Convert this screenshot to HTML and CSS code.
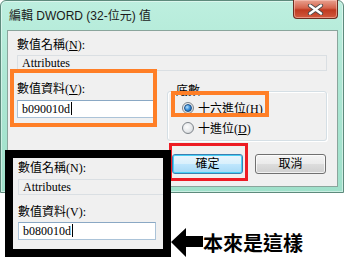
FILE: index.html
```html
<!DOCTYPE html>
<html lang="zh-Hant">
<head>
    <meta charset="UTF-8">
    <meta name="viewport" content="width=device-width, initial-scale=1.0">
    <title>編輯 DWORD (32-位元) 值</title>
    <link rel="stylesheet" href="styles.css">
</head>
<body>
    <div class="window">
        <div class="titlebar">
            <span class="title">編輯 DWORD (32-位元) 值</span>
            <button class="close" aria-label="關閉">
                <svg width="17" height="11" viewBox="0 0 17 11">
                    <path d="M3 1.5 L14 9.5 M14 1.5 L3 9.5" stroke="#4a4a4a" stroke-width="4.2" stroke-linecap="round"/>
                    <path d="M3 1.5 L14 9.5 M14 1.5 L3 9.5" stroke="#fff" stroke-width="2.4" stroke-linecap="round"/>
                </svg>
            </button>
        </div>
        <div class="client">
            <div class="label">數值名稱(<u>N</u>):</div>
            <div class="field readonly">Attributes</div>
            <div class="row">
                <div class="left-col">
                    <div class="label label-data">數值資料(<u>V</u>):</div>
                    <div class="field edit">b090010d<span class="caret"></span></div>
                </div>
                <div class="group">
                    <span class="legend">底數</span>
                    <div class="radio-row">
                        <span class="radio checked"></span>
                        <span>十六進位(<u>H</u>)</span>
                    </div>
                    <div class="radio-row">
                        <span class="radio"></span>
                        <span>十進位(<u>D</u>)</span>
                    </div>
                </div>
            </div>
            <div class="buttons">
                <button class="btn default">確定</button>
                <button class="btn">取消</button>
            </div>
        </div>
    </div>

    <!-- annotations -->
    <div class="mark mark-data"></div>
    <div class="mark mark-hex"></div>
    <div class="mark-ok"></div>

    <div class="before">
        <div class="label">數值名稱(N):</div>
        <div class="field readonly">Attributes</div>
        <div class="label label-data">數值資料(V):</div>
        <div class="field edit">b080010d<span class="caret"></span></div>
    </div>

    <div class="note">
        <svg class="arrow" width="32" height="30" viewBox="0 0 32 30">
            <polygon points="0,14 15,0 15,8 32,8 32,19 15,19 15,29" fill="#000"/>
        </svg>
        <span>本來是這樣</span>
    </div>
</body>
</html>
```

FILE: styles.css
```css
* {
    margin: 0;
    padding: 0;
    box-sizing: border-box;
}

body {
    position: relative;
    width: 345px;
    height: 264px;
    background: #fff;
    font-family: 'Liberation Serif', 'Noto Sans CJK TC', serif;
    font-size: 12px;
    color: #000;
    overflow: hidden;
}

u {
    text-decoration: underline;
    text-underline-offset: 1px;
}

/* Window frame */
.window {
    width: 344px;
    height: 193px;
    display: flex;
    flex-direction: column;
    background: linear-gradient(180deg, #bdefdf 0%, #aee7d4 40%, #9fe0ca 100%);
    border: 1px solid #5d8a7c;
    border-radius: 6px 6px 0 0;
    box-shadow: inset 0 0 0 1px rgba(255, 255, 255, 0.45);
}

.titlebar {
    height: 29px;
    display: flex;
    justify-content: space-between;
    align-items: flex-start;
    padding-left: 8px;
}

.title {
    margin-top: 8px;
    font-family: 'Liberation Sans', 'Noto Sans CJK TC', sans-serif;
    font-size: 12px;
    line-height: 14px;
    color: #1a1a1a;
}

.close {
    width: 45px;
    height: 19px;
    margin-top: -1px;
    margin-right: 5px;
    display: flex;
    justify-content: center;
    align-items: center;
    border: 1px solid #6b2d20;
    border-top: none;
    border-radius: 0 0 4px 4px;
    background: linear-gradient(180deg, #e8a190 0%, #d5644c 45%, #bf3a20 55%, #d25a3e 100%);
    box-shadow: inset 0 0 0 1px rgba(255, 210, 200, 0.5);
}

.client {
    height: 157px;
    margin: 0 5px 0 6px;
    padding: 7px 10px 0 9px;
    background: #f0f0f0;
    border: 1px solid #8aa59c;
}

.label {
    height: 14px;
    line-height: 14px;
    white-space: nowrap;
}

.field {
    height: 16px;
    margin-top: 3px;
    padding-left: 4px;
    line-height: 14px;
    border: 1px solid #d5dbe0;
    white-space: nowrap;
    overflow: hidden;
}

.field.readonly {
    background: #f0f0f0;
    border-color: #dadfe3;
}

.field.edit {
    width: 137px;
    height: 18px;
    line-height: 16px;
    margin-top: 4px;
    background: #fff;
    border: 1px solid #abc3d8;
    border-top-color: #8aa8c4;
}

.caret {
    display: inline-block;
    width: 1px;
    height: 13px;
    margin-left: 1px;
    vertical-align: -2px;
    background: #000;
}

.row {
    display: flex;
    gap: 13px;
}

.left-col {
    width: 137px;
}

.label-data {
    margin-top: 11px;
}

.group {
    width: 160px;
    height: 50px;
    margin-top: 20px;
    padding-left: 14px;
    border: 1px solid #d5dfe5;
    border-radius: 3px;
    box-shadow: inset 1px 1px 0 #fff, 1px 1px 0 #fff;
}

.legend {
    display: table;
    height: 14px;
    margin: -8px 0 0 -8px;
    padding: 0 2px;
    line-height: 14px;
    background: #f0f0f0;
}

.radio-row {
    height: 20px;
    display: flex;
    align-items: center;
    gap: 4px;
}

.radio {
    width: 12px;
    height: 12px;
    border-radius: 50%;
    border: 1px solid #7f858b;
    background: radial-gradient(circle at 40% 40%, #fdfdfd 0%, #e6e8ea 55%, #c4c8cc 100%);
    display: flex;
    justify-content: center;
    align-items: center;
}

.radio.checked::after {
    content: "";
    width: 6px;
    height: 6px;
    border-radius: 50%;
    border: 1px solid #1c4f86;
    background: radial-gradient(circle at 35% 35%, #b4e2ff 0%, #2f86d6 55%, #12508f 100%);
}

.buttons {
    display: flex;
    justify-content: flex-end;
    gap: 12px;
    margin-top: 13px;
    padding-right: 1px;
}

.btn {
    width: 71px;
    height: 20px;
    font-family: 'Liberation Serif', 'Noto Sans CJK TC', serif;
    font-size: 12px;
    line-height: 16px;
    color: #000;
    border: 1px solid #707070;
    border-radius: 3px;
    background: linear-gradient(180deg, #f4f4f4 0%, #ebebeb 48%, #dddddd 52%, #cfcfcf 100%);
    box-shadow: inset 0 0 0 1px rgba(255, 255, 255, 0.7);
}

.btn.default {
    border-color: #3c7fb1;
    background: linear-gradient(180deg, #eaf6fd 0%, #d9f0fc 48%, #bee6fd 52%, #a7d9f5 100%);
    box-shadow: inset 0 0 0 1px #48d0f5;
}

/* Annotation overlays */
.mark {
    position: absolute;
    border: 4px solid #ff7f27;
}

.mark-data {
    left: 10px;
    top: 69px;
    width: 147px;
    height: 58px;
}

.mark-hex {
    left: 171px;
    top: 91px;
    width: 98px;
    height: 26px;
}

.mark-ok {
    position: absolute;
    left: 169px;
    top: 143px;
    width: 79px;
    height: 38px;
    border: 3px solid #ed1c24;
}

.before {
    position: absolute;
    left: 5px;
    top: 150px;
    width: 166px;
    height: 107px;
    padding: 3px 0 0 5px;
    border: 8px solid #000;
    background: #f0f0f0;
    overflow: hidden;
}

.before .field.readonly {
    width: 160px;
    margin-top: 4px;
}

.before .label-data {
    margin-top: 10px;
}

.before .field.edit {
    width: 138px;
    margin-top: 3px;
}

.note {
    position: absolute;
    left: 171px;
    top: 228px;
    display: flex;
    align-items: center;
}

.note span {
    font-family: 'Noto Sans CJK TC', sans-serif;
    font-size: 20px;
    font-weight: bold;
    line-height: 24px;
    color: #000;
}
```
